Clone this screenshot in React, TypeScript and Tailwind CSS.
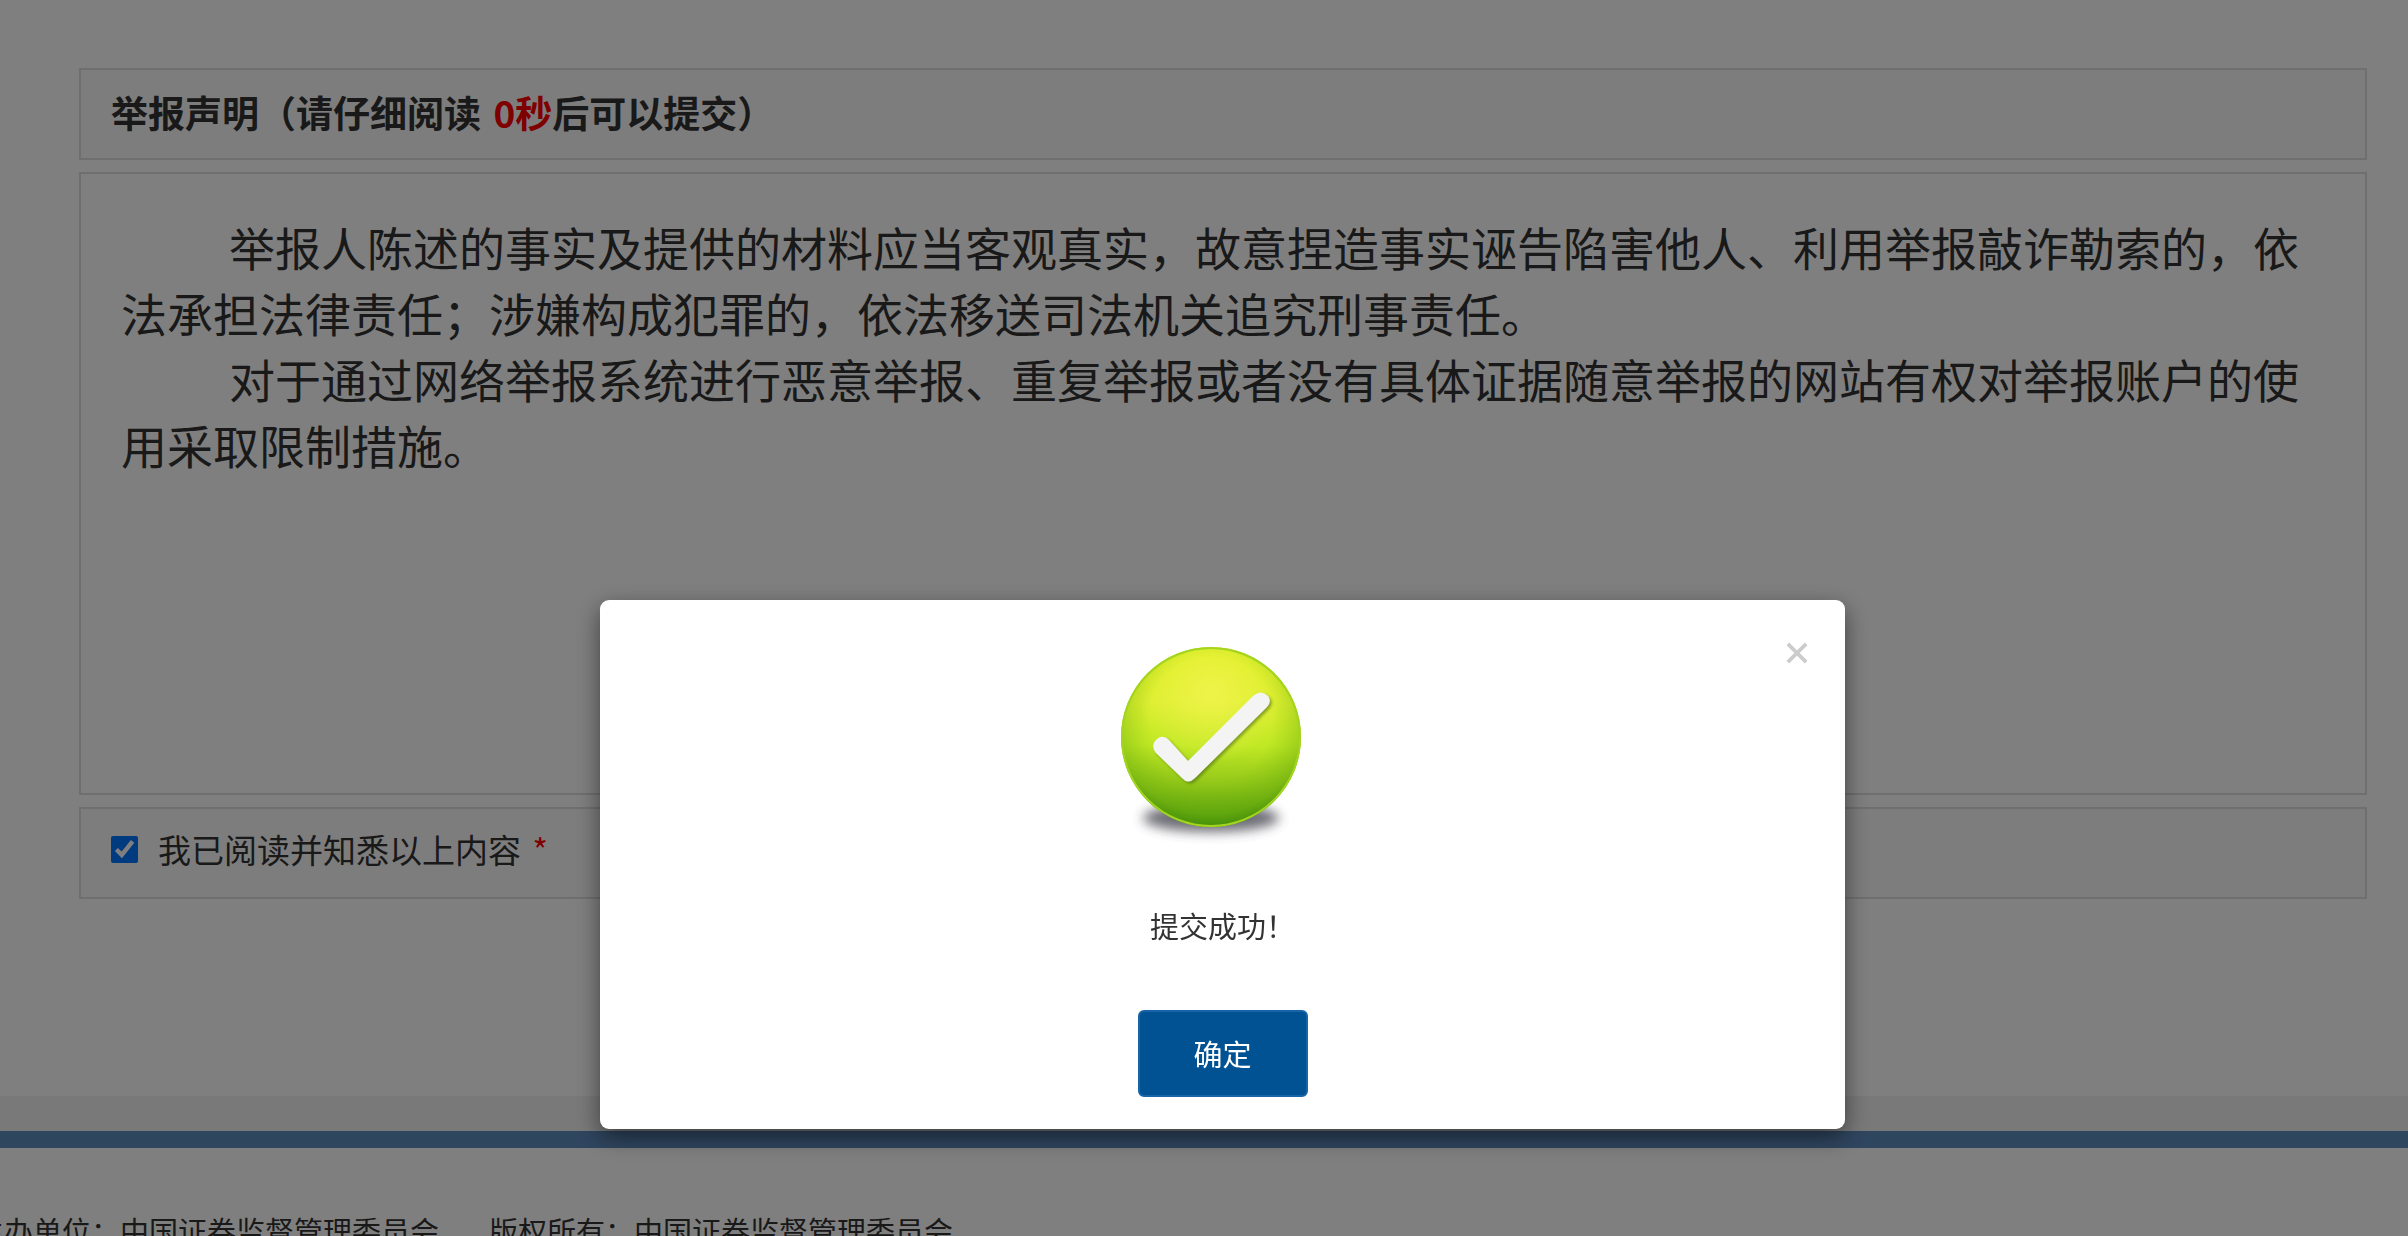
import { useState } from 'react';

const DECLARATION = [
  '举报人陈述的事实及提供的材料应当客观真实，故意捏造事实诬告陷害他人、利用举报敲诈勒索的，依法承担法律责任；涉嫌构成犯罪的，依法移送司法机关追究刑事责任。',
  '对于通过网络举报系统进行恶意举报、重复举报或者没有具体证据随意举报的网站有权对举报账户的使用采取限制措施。',
];

function SuccessIcon() {
  return (
    <svg width="220" height="220" viewBox="0 0 220 220" aria-hidden="true">
      <defs>
        <linearGradient id="ball" x1="0" y1="0" x2="0" y2="1">
          <stop offset="0" stopColor="#dcee20" />
          <stop offset="0.3" stopColor="#dcee30" />
          <stop offset="0.55" stopColor="#c0e824" />
          <stop offset="0.78" stopColor="#8ec418" />
          <stop offset="1" stopColor="#4d9a0c" />
        </linearGradient>
        <radialGradient id="edge" cx="0.5" cy="0.4" r="0.62">
          <stop offset="0.55" stopColor="#6fb50a" stopOpacity="0" />
          <stop offset="0.85" stopColor="#5da40a" stopOpacity="0.4" />
          <stop offset="1" stopColor="#37800a" stopOpacity="0.75" />
        </radialGradient>
        <radialGradient id="glow" cx="0.5" cy="0.25" r="0.4">
          <stop offset="0" stopColor="#f4f550" stopOpacity="0.8" />
          <stop offset="1" stopColor="#f4f550" stopOpacity="0" />
        </radialGradient>
        <filter id="soft" x="-20%" y="-60%" width="140%" height="220%">
          <feGaussianBlur stdDeviation="6" />
        </filter>
        <filter id="tickShade" x="-20%" y="-20%" width="140%" height="140%">
          <feDropShadow dx="2" dy="2" stdDeviation="1.5" floodColor="#4a6a08" floodOpacity="0.6" />
        </filter>
      </defs>
      <ellipse cx="110" cy="191" rx="68" ry="14" fill="#3c3c48" opacity="0.75" filter="url(#soft)" />
      <circle cx="110" cy="110" r="90" fill="url(#ball)" />
      <circle cx="110" cy="110" r="90" fill="url(#edge)" />
      <circle cx="110" cy="110" r="90" fill="url(#glow)" />
      <circle cx="110" cy="110" r="89" fill="none" stroke="#a2d420" strokeWidth="2" />
      <path
        d="M54 114 Q61 106 68 113 L87 134 L152 69 Q160 62 167 69 Q171 74 166 80 L94 151 Q87 158 81 151 L55 126 Q50 120 54 114Z"
        fill="#f4f4f4"
        filter="url(#tickShade)"
      />
    </svg>
  );
}

function SuccessDialog({ onClose }: { onClose: () => void }) {
  return (
    <div className="fixed inset-0 flex items-start justify-center bg-black/50 pt-[600px] pl-[37px]">
      <div
        role="dialog"
        aria-modal="true"
        aria-labelledby="dialog-message"
        className="relative flex w-[1245px] max-w-full flex-col items-center rounded-[9px] bg-white pt-[27px] pb-8 shadow-[0_8px_23px_rgba(0,0,0,0.5)]"
      >
        <button type="button" aria-label="关闭" onClick={onClose} className="absolute top-[41px] right-9 p-px text-[#cccccc]">
          <svg width="22" height="22" viewBox="0 0 24 24" fill="none" stroke="currentColor" strokeWidth="4" aria-hidden="true">
            <path d="M2 2 L22 22 M22 2 L2 22" />
          </svg>
        </button>
        <div className="pr-6">
          <SuccessIcon />
        </div>
        <p id="dialog-message" className="mt-14 text-[29px] leading-[44px] text-[#333333]">提交成功！</p>
        <button
          type="button"
          onClick={onClose}
          className="mt-[63px] h-[87px] w-[170px] rounded-md border-2 border-[#1765a8] bg-[#005293] text-[29px] text-white"
        >
          确定
        </button>
      </div>
    </div>
  );
}

export default function App() {
  const [open, setOpen] = useState(true);

  return (
    <div className="flex h-screen flex-col overflow-hidden bg-white font-['Noto_Sans_CJK_SC',sans-serif] text-[#333333]">
      <main className="flex flex-col gap-3 pt-[68px] pr-[41px] pb-[197px] pl-[79px]">
        <h1 className="border-2 border-[#dfdfdf] bg-[#fbfbfb] px-[30px] pt-3.5 pb-[18px] text-[37px] leading-[56px] font-bold">
          举报声明（请仔细阅读 <span className="ml-1 text-[#ff0000]">0秒</span>后可以提交）
        </h1>

        <section className="min-h-[623px] border-2 border-[#dfdfdf] pt-[39px] pr-14 pb-10 pl-10 text-[46px] leading-[66px]">
          {DECLARATION.map(text => (
            <p key={text} className="indent-[108px]">{text}</p>
          ))}
        </section>

        <div className="flex items-center border-2 border-[#dfdfdf] bg-[#fbfbfb] px-[30px] pt-4 pb-6 text-[33px] leading-[48px]">
          <input id="agree" type="checkbox" defaultChecked className="mr-5 size-[27px] accent-[#0075ff]" />
          <label htmlFor="agree">
            我已阅读并知悉以上内容 <span className="ml-1 text-[#ff0000]">*</span>
          </label>
        </div>
      </main>

      <footer className="shrink-0 border-t-[35px] border-[#f2f2f2]">
        <div className="h-[17px] bg-[#5f8cbf]" />
        <div className="-ml-[25px] flex gap-[50px] bg-white pt-[60px] text-[29px] leading-[44px] whitespace-nowrap">
          <span>主办单位：中国证券监督管理委员会</span>
          <span>版权所有：中国证券监督管理委员会</span>
        </div>
      </footer>

      {open && <SuccessDialog onClose={() => setOpen(false)} />}
    </div>
  );
}
